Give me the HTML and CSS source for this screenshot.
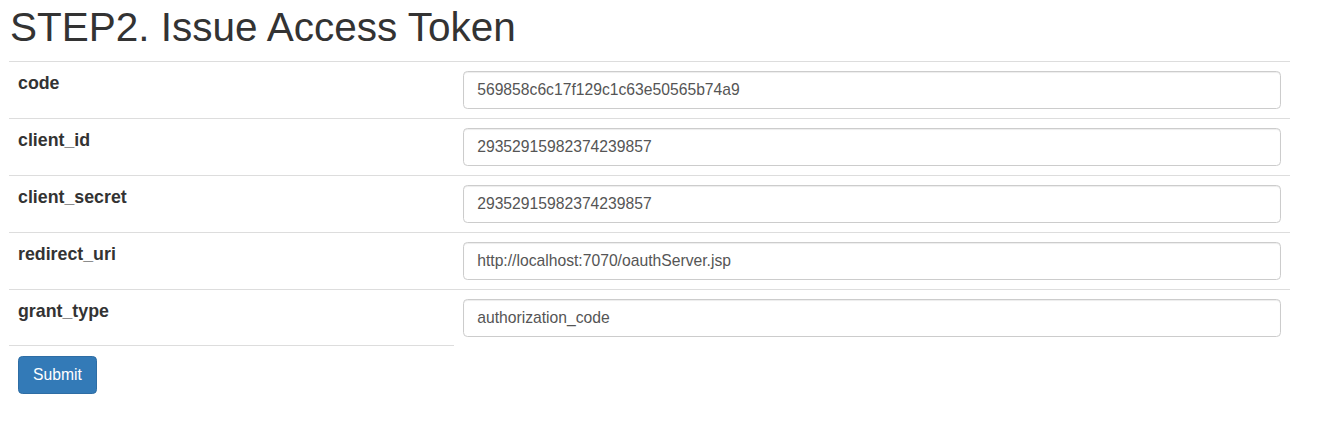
FILE: index.html
```html
<!DOCTYPE html>
<html>
<head>
<meta charset="utf-8">
<title>STEP2. Issue Access Token</title>
<link rel="stylesheet" href="styles.css">
</head>
<body>
<div class="page">
  <h1 class="title">STEP2. Issue Access Token</h1>
  <form class="token-form">
    <table class="fields">
      <tbody>
        <tr>
          <th class="label">code</th>
          <td class="value"><input class="field" type="text" value="569858c6c17f129c1c63e50565b74a9"></td>
        </tr>
        <tr>
          <th class="label">client_id</th>
          <td class="value"><input class="field" type="text" value="29352915982374239857"></td>
        </tr>
        <tr>
          <th class="label">client_secret</th>
          <td class="value"><input class="field" type="text" value="29352915982374239857"></td>
        </tr>
        <tr>
          <th class="label">redirect_uri</th>
          <td class="value"><input class="field" type="text" value="http://localhost:7070/oauthServer.jsp"></td>
        </tr>
        <tr>
          <th class="label">grant_type</th>
          <td class="value"><input class="field" type="text" value="authorization_code"></td>
        </tr>
        <tr>
          <td class="action"><button class="btn-submit" type="button">Submit</button></td>
        </tr>
      </tbody>
    </table>
  </form>
</div>
</body>
</html>
```
FILE: styles.css
```css
* {
  box-sizing: border-box;
}

html, body {
  margin: 0;
  padding: 0;
  background: #fff;
}

body {
  font-family: "Liberation Sans", Arial, Helvetica, sans-serif;
  font-size: 15.4px;
  line-height: 22px;
  color: #333;
}

.page {
  padding-left: 9px;
}

.title {
  margin: 6px 0 11px 1px;
  font-size: 40.5px;
  line-height: 43.6px;
  font-weight: normal;
  color: #333;
}

.token-form {
  margin: 0;
}

.fields {
  width: 1281px;
  border-collapse: collapse;
  border-spacing: 0;
}

.fields td,
.fields th {
  border-top: 1px solid #ddd;
  padding: 9px;
  vertical-align: top;
}

.fields th.label {
  width: 445px;
  text-align: left;
  font-size: 17.8px;
  font-weight: bold;
  color: #333;
  padding-top: 10px;
}

.field {
  display: block;
  width: 100%;
  height: 38px;
  margin: 0;
  padding: 6.6px 13.2px;
  font-family: "Liberation Sans", Arial, Helvetica, sans-serif;
  font-size: 15.7px;
  line-height: 22px;
  color: #555;
  background: #fff;
  border: 1px solid #ccc;
  border-radius: 4.4px;
  box-shadow: inset 0 1px 1px rgba(0, 0, 0, 0.075);
  outline: none;
}

.fields td.action {
  padding-top: 10px;
}

.btn-submit {
  display: block;
  height: 38px;
  width: 79px;
  padding: 0;
  font-family: "Liberation Sans", Arial, Helvetica, sans-serif;
  font-size: 15.7px;
  line-height: 22px;
  color: #fff;
  background: #337ab7;
  border: 1px solid #2e6da4;
  border-radius: 4.4px;
  cursor: pointer;
}
```
